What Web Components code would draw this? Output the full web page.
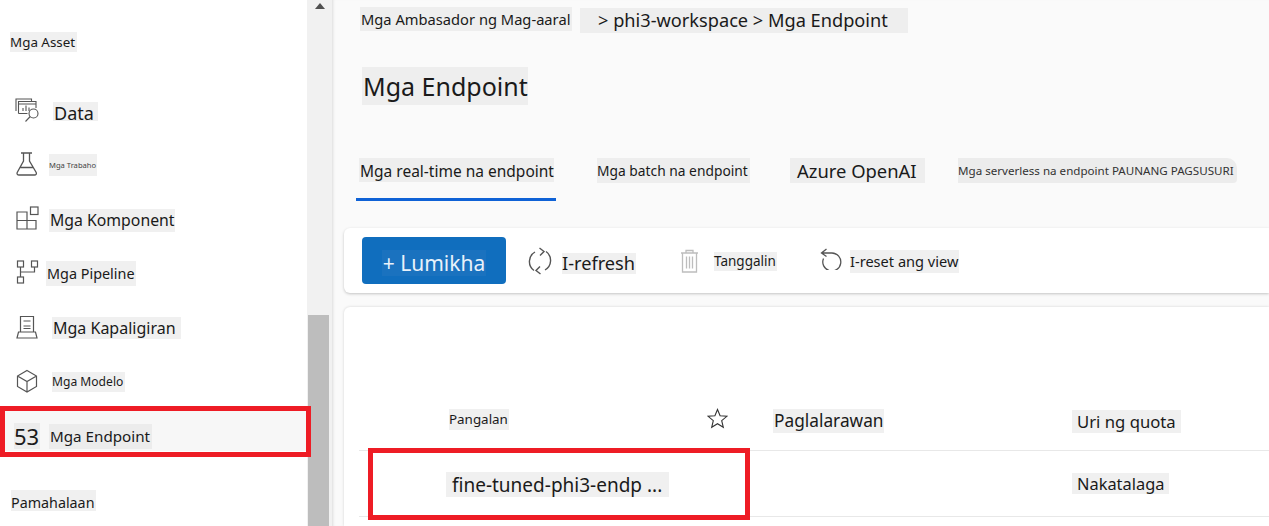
<!DOCTYPE html>
<html lang="tl">
<head>
<meta charset="utf-8">
<title>Mga Endpoint</title>
<style>
  html, body { margin: 0; height: 526px; overflow: hidden; background: #fff; }
  body { font-family: "Noto Sans", "Open Sans", sans-serif; color: #1a1a1a; }
  studio-shell { height: 526px; }
</style>
</head>
<body>
<studio-shell>
  <side-nav slot="nav">
    <patch-text style="--size:13.400px;--w:67px;--h:20px;margin:32px 0 0 10px">Mga Asset</patch-text>
    <nav-row style="margin-top:32px;--gap:14px;--left:15px">
      <svg slot="icon" width="24" height="24" viewBox="0 0 24 24" fill="none" stroke="#555" stroke-width="1.100" style="margin-top:-2px"><path d="M1 13V1h15.500v2.500M3.500 15.500V3.500H21V10M3.500 15.500h9"/><path d="M3.500 6h17.500M8 13v-3M11 13V7.500M14 13V9.500"/><circle cx="18.500" cy="15.500" r="4.500"/><path d="M15.200 18.500L10.500 23.500"/></svg>
      <patch-text style="--size:18px;--w:45px;--h:19px;--pad:1px;--y:4px">Data</patch-text>
    </nav-row>
    <nav-row style="--gap:11px;--left:16px">
      <svg slot="icon" width="22" height="24" viewBox="0 0 22 24" fill="none" stroke="#555" stroke-width="1.300" style="margin-top:-2px"><path d="M5 1h11M7.500 1v8L1.200 20.500C.6 22 1.500 23 3 23h15.500c1.500 0 2.300-1 1.700-2.500L13.500 9V1M4.500 15.500h12.500"/></svg>
      <patch-text style="--size:7.600px;--w:48px;--h:22px;--fg:#444">Mga Trabaho</patch-text>
    </nav-row>
    <nav-row style="--gap:10px;--left:16px">
      <svg slot="icon" width="23" height="24" viewBox="0 0 23 24" fill="none" stroke="#555" stroke-width="1.200" style="margin-top:-2px"><path d="M1 6h10v17H1zM1 14.500h19V23H11M11 6v8.500"/><rect x="14.500" y="1" width="7.500" height="7.500"/></svg>
      <patch-text style="--size:15.800px;--w:126px;--h:23px;--pad:1px;margin-top:3px">Mga Komponent</patch-text>
    </nav-row>
    <nav-row style="--gap:7px;--left:16px">
      <svg slot="icon" width="23" height="24" viewBox="0 0 23 24" fill="none" stroke="#555" stroke-width="1.200" style="margin-top:-2px"><rect x="1.500" y="1" width="6" height="6"/><rect x="15.500" y="1" width="6" height="6"/><rect x="1.500" y="17" width="6" height="6"/><path d="M4.500 7v10M4.500 12h14V7"/></svg>
      <patch-text style="--size:14.400px;--w:90px;--h:25px;--pad:1px">Mga Pipeline</patch-text>
    </nav-row>
    <nav-row style="--gap:14px;--left:16px">
      <svg slot="icon" width="22" height="24" viewBox="0 0 22 24" fill="none" stroke="#555" stroke-width="1.200"><path d="M4.500 17V1.500h13V17M1 23l1.500-6h17l1.500 6zM7.500 6h7M7.500 11h7M7.500 13.500h7"/></svg>
      <patch-text style="--size:16px;--w:129px;--h:22px;--pad:1px;margin-top:2px">Mga Kapaligiran</patch-text>
    </nav-row>
    <nav-row style="--gap:14px;--left:16px">
      <svg slot="icon" width="22" height="24" viewBox="0 0 22 24" fill="none" stroke="#555" stroke-width="1.200"><path d="M11 1.500l9.500 5.500v10.500L11 23l-9.500-5.500V7zM1.500 7l9.500 5.500L20.500 7M11 12.500V23"/></svg>
      <patch-text style="--size:12.100px;--w:73px;--h:20px;margin-top:2px">Mga Modelo</patch-text>
    </nav-row>
    <nav-row style="--gap:9px;--left:14px;--row:#f7f7f7;height:40px;margin-top:3px;margin-bottom:39px">
      <patch-text style="--size:22px;--w:26px;--h:26px;--bg:#ececec;margin-top:10px">53</patch-text>
      <patch-text style="--size:15.200px;--w:103px;--h:25px;--pad:1px;--bg:#ececec;margin-top:10px">Mga Endpoint</patch-text>
    </nav-row>
    <patch-text style="--size:14.300px;--w:85px;--h:21px;--y:4px;margin-left:11px">Pamahalaan</patch-text>
    <red-box style="left:0;top:406px;width:311px;height:51px"></red-box>
  </side-nav>

  <side-scroll slot="scroll"></side-scroll>

  <main-pane slot="main">
    <bread-crumbs>
      <patch-text style="--size:14.700px;--w:212px;--h:24px;--bg:#eeeeee;--pad:1px">Mga Ambasador ng Mag-aaral</patch-text>
      <patch-text style="--size:18.200px;--w:328px;--h:25px;--bg:#eeeeee;--pad:18px;margin-top:1px">&gt; phi3-workspace &gt; Mga Endpoint</patch-text>
    </bread-crumbs>
    <patch-text style="--size:25px;--w:166px;--h:38px;--bg:#eeeeee;--pad:1px;margin:34px 0 0 30px">Mga Endpoint</patch-text>
    <tab-bar>
      <tab-item active><patch-text style="--size:15.500px;--w:195px;--h:24px;--y:3px;--bg:#eeeeee;--pad:1px">Mga real-time na endpoint</patch-text></tab-item>
      <tab-item style="margin-left:41px"><patch-text style="--size:13.800px;--w:153px;--h:25px;--bg:#eeeeee">Mga batch na endpoint</patch-text></tab-item>
      <tab-item style="margin-left:40px"><patch-text style="--size:18.400px;--w:135px;--h:25px;--bg:#eeeeee;--pad:7px">Azure OpenAI</patch-text></tab-item>
      <tab-item style="margin-left:33px"><patch-text style="--size:11.600px;--w:279px;--h:25px;--bg:#ececec;--r:0 10px 4px 0;--fg:#333">Mga serverless na endpoint PAUNANG PAGSUSURI</patch-text></tab-item>
    </tab-bar>
    <tool-bar>
      <create-button>+ Lumikha</create-button>
      <tool-action style="margin-left:22px;--gap:10px">
        <svg slot="icon" width="24" height="28" viewBox="0 0 24 28" fill="none" stroke="#555" stroke-width="1.400"><path d="M7 5A11 11 0 0 0 6 23.500M17 23A11 11 0 0 0 18 4.500"/><path d="M11.500 1l4.500 3.500-4 4M12.500 27L8 23.500l4-4"/></svg>
        <patch-text style="--size:18.200px;--w:74px;--h:21px;margin-top:5px">I-refresh</patch-text>
      </tool-action>
      <tool-action style="margin-left:44px;--gap:15px">
        <svg slot="icon" width="19" height="24" viewBox="0 0 19 24" fill="none" stroke="#bdbdbd" stroke-width="1.300"><path d="M1 4h17M6 4V1.500h7V4M2.500 4v19h14V4M6.500 7.500v12M9.500 7.500v12M12.500 7.500v12"/></svg>
        <patch-text style="--size:13.500px;--w:63px;--h:19px;margin-top:1px">Tanggalin</patch-text>
      </tool-action>
      <tool-action style="margin-left:43px;--gap:7px">
        <svg slot="icon" width="23" height="22" viewBox="0 0 23 22" fill="none" stroke="#555" stroke-width="1.300" style="margin-top:-4px"><path d="M6.500 1L1.500 5l5 3.500M1.500 5H12a9 9 0 1 1-8.500 5.500"/></svg>
        <patch-text style="--size:14.600px;--w:109px;--h:23px;margin-top:2px">I-reset ang view</patch-text>
      </tool-action>
    </tool-bar>
    <table-card>
      <table-row style="height:49px;padding-bottom:6px">
        <patch-text style="--size:13.400px;--w:60px;--h:21px;margin-left:90px">Pangalan</patch-text>
        <svg width="21" height="21" viewBox="0 0 21 21" fill="none" stroke="#333" stroke-width="1.100" style="margin-top:-3px"><path d="M10.500 1.500l2.600 6.300 6.800.5-5.200 4.400 1.600 6.600-5.800-3.600-5.800 3.600 1.600-6.600L1.100 8.300l6.800-.5z"/></svg>
        <patch-text style="--size:17.300px;--w:111px;--h:24px;--pad:1px;margin-top:2px">Paglalarawan</patch-text>
        <patch-text style="--size:16.700px;--w:109px;--h:23px;--pad:5px;margin-top:3px">Uri ng quota</patch-text>
      </table-row>
      <table-row style="height:65px">
        <patch-text style="--size:19px;--w:223px;--h:25px;--y:2px;--pad:6px;margin-left:87px;margin-top:1px">fine-tuned-phi3-endp ...</patch-text>
        <span></span>
        <span></span>
        <patch-text style="--size:16.400px;--w:97px;--h:21px;--pad:5px">Nakatalaga</patch-text>
      </table-row>
    </table-card>
    <red-box style="left:36px;top:448px;width:382px;height:72px"></red-box>
  </main-pane>
</studio-shell>

<script>
  function shadow(el, html) {
    el.attachShadow({ mode: 'open' });
    el.shadowRoot.innerHTML = html;
  }

  // screen skeleton: sidebar, scrollbar, content
  class StudioShell extends HTMLElement {
    connectedCallback() {
      shadow(this, `
        <style>
          :host { display: grid; grid-template-columns: 307px 25px 1fr; overflow: hidden; }
        </style>
        <slot name="nav"></slot><slot name="scroll"></slot><slot name="main"></slot>
      `);
    }
  }

  class SideNav extends HTMLElement {
    connectedCallback() {
      shadow(this, `
        <style>
          :host { display: flex; flex-direction: column; align-items: flex-start; position: relative; background: #fff; z-index: 4; height: 526px; }
        </style>
        <slot></slot>
      `);
    }
  }

  class NavRow extends HTMLElement {
    connectedCallback() {
      shadow(this, `
        <style>
          :host { display: flex; align-items: center; gap: var(--gap, 12px); box-sizing: border-box; width: 307px; height: 54px; padding-left: var(--left, 16px); background: var(--row, transparent); flex: none; }
          slot[name=icon]::slotted(svg) { flex: none; display: block; }
        </style>
        <slot name="icon"></slot><slot></slot>
      `);
    }
  }

  // text on the pale patch that sits behind every label
  class PatchText extends HTMLElement {
    connectedCallback() {
      shadow(this, `
        <style>
          :host { display: block; flex: none; box-sizing: border-box; width: var(--w); height: var(--h); padding-left: var(--pad, 0); padding-top: var(--y, 0); background: var(--bg, #f0f0f0); border-radius: var(--r, 0); color: var(--fg, #1a1a1a); font-size: var(--size); line-height: calc(var(--h) - var(--y, 0px)); white-space: nowrap; }
        </style>
        <slot></slot>
      `);
    }
  }

  class RedBox extends HTMLElement {
    connectedCallback() {
      shadow(this, `
        <style>
          :host { display: block; position: absolute; box-sizing: border-box; border: 5px solid #ee1c25; z-index: 5; pointer-events: none; }
        </style>
      `);
    }
  }

  class SideScroll extends HTMLElement {
    connectedCallback() {
      shadow(this, `
        <style>
          :host { display: flex; flex-direction: column; align-items: center; background: #f1f1f1; height: 526px; z-index: 3; }
          .arrow { width: 0; height: 0; margin-top: 3px; border: 5.500px solid transparent; border-top: 0; border-bottom: 6px solid #505050; flex: none; }
          .thumb { width: 21px; margin-top: 306px; margin-right: 2px; flex: 1; background: #bdbdbd; }
        </style>
        <div class="arrow"></div>
        <div class="thumb"></div>
      `);
    }
  }

  class MainPane extends HTMLElement {
    connectedCallback() {
      shadow(this, `
        <style>
          :host { display: flex; flex-direction: column; align-items: flex-start; position: relative; background: #fafafa; height: 526px; overflow: hidden; box-shadow: inset 3px 0 3px -2px rgba(0,0,0,.12); }
        </style>
        <slot></slot>
      `);
    }
  }

  class BreadCrumbs extends HTMLElement {
    connectedCallback() {
      shadow(this, `
        <style>
          :host { display: flex; gap: 8px; align-items: flex-start; padding: 7px 0 0 28px; height: 26px; flex: none; }
        </style>
        <slot></slot>
      `);
    }
  }

  class TabBar extends HTMLElement {
    connectedCallback() {
      shadow(this, `
        <style>
          :host { display: flex; align-items: flex-start; margin: 51px 0 0 24px; height: 45px; flex: none; }
        </style>
        <slot></slot>
      `);
    }
  }

  class TabItem extends HTMLElement {
    connectedCallback() {
      shadow(this, `
        <style>
          :host { display: block; padding-top: 2px; }
          :host([active]) { box-sizing: border-box; width: 200px; height: 45px; padding-left: 3px; border-bottom: 3px solid #0f62d6; }
        </style>
        <slot></slot>
      `);
    }
  }

  class ToolBar extends HTMLElement {
    connectedCallback() {
      shadow(this, `
        <style>
          :host { display: flex; align-items: center; box-sizing: border-box; align-self: stretch; height: 65px; margin: 27px 0 0 12px; padding-left: 18px; background: #fff; border-radius: 6px 0 0 6px; box-shadow: 0 1px 3px rgba(0,0,0,.22); flex: none; }
        </style>
        <slot></slot>
      `);
    }
  }

  class CreateButton extends HTMLElement {
    connectedCallback() {
      shadow(this, `
        <style>
          :host { display: flex; align-items: center; justify-content: center; box-sizing: border-box; width: 144px; height: 47px; padding-top: 4px; background: #106ebe; border-radius: 4px; color: #e8f1fa; font-size: 21px; flex: none; }
          span { background: #1a72bf; padding: 0 1px; line-height: 26px; }
        </style>
        <span><slot></slot></span>
      `);
    }
  }

  class ToolAction extends HTMLElement {
    connectedCallback() {
      shadow(this, `
        <style>
          :host { display: flex; align-items: center; gap: var(--gap, 10px); flex: none; }
          slot[name=icon]::slotted(svg) { display: block; flex: none; }
        </style>
        <slot name="icon"></slot><slot></slot>
      `);
    }
  }

  class TableCard extends HTMLElement {
    connectedCallback() {
      shadow(this, `
        <style>
          :host { display: block; box-sizing: border-box; align-self: stretch; flex: 1; margin: 14px 0 0 12px; padding: 88px 0 0 15px; background: #fff; border-radius: 6px 0 0 0; box-shadow: 0 0 3px rgba(0,0,0,.16); }
        </style>
        <slot></slot>
      `);
    }
  }

  class TableRow extends HTMLElement {
    connectedCallback() {
      shadow(this, `
        <style>
          :host { display: grid; grid-template-columns: 348px 66px 299px 1fr; align-items: center; border-bottom: 1px solid #e8e8e8; box-sizing: content-box; }
        </style>
        <slot></slot>
      `);
    }
  }

  customElements.define('studio-shell', StudioShell);
  customElements.define('side-nav', SideNav);
  customElements.define('nav-row', NavRow);
  customElements.define('patch-text', PatchText);
  customElements.define('red-box', RedBox);
  customElements.define('side-scroll', SideScroll);
  customElements.define('main-pane', MainPane);
  customElements.define('bread-crumbs', BreadCrumbs);
  customElements.define('tab-bar', TabBar);
  customElements.define('tool-bar', ToolBar);
  customElements.define('tab-item', TabItem);
  customElements.define('create-button', CreateButton);
  customElements.define('tool-action', ToolAction);
  customElements.define('table-card', TableCard);
  customElements.define('table-row', TableRow);
</script>
</body>
</html>
